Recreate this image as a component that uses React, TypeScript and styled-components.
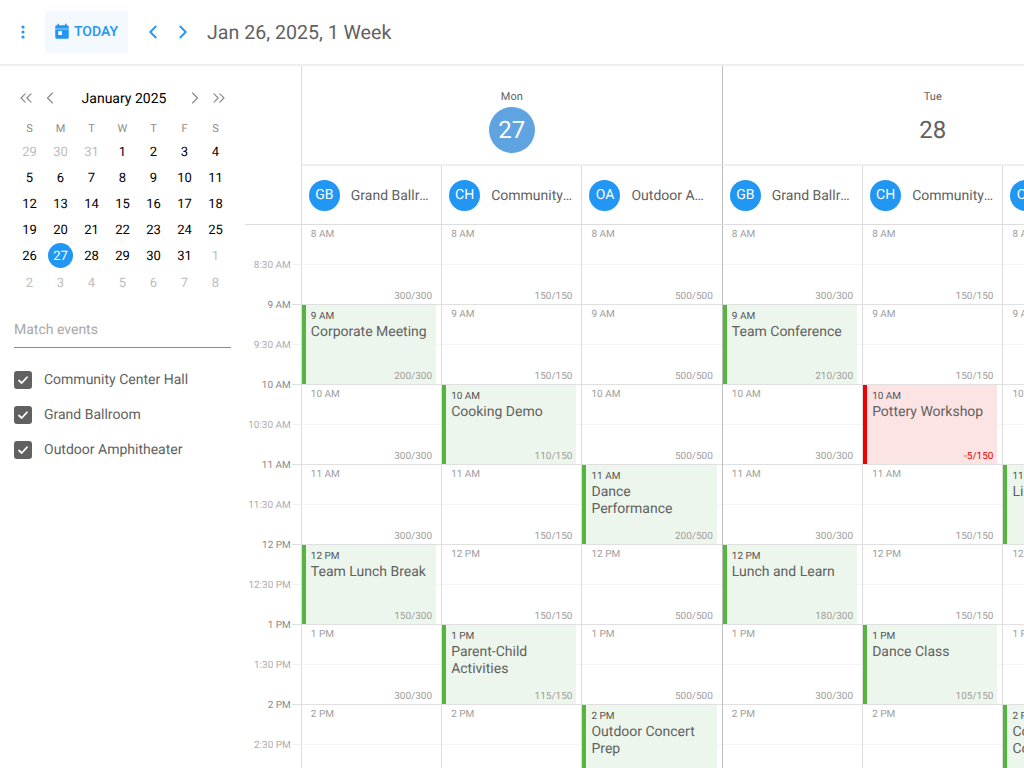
import React from 'react';
import styled, { createGlobalStyle } from 'styled-components';
import { ChevronLeft, ChevronRight, ChevronsLeft, ChevronsRight } from 'lucide-react';

const GlobalStyle = createGlobalStyle`
  html, body {
    margin: 0;
    width: 1024px;
    height: 768px;
    overflow: hidden;
    background: #fff;
    font-family: Roboto, "Liberation Sans", sans-serif;
    text-rendering: geometricPrecision;
  }
  * {
    box-sizing: border-box;
  }
`;

type EventType = {
  title: string
  booked: number
  danger?: boolean
}

type ResourceType = {
  initials: string
  name: string
  capacity: number
  events: Record<string, EventType>
}

type DayType = {
  name: string
  date: number
  today?: boolean
  resources: ResourceType[]
}

const HOURS = ['8 AM', '9 AM', '10 AM', '11 AM', '12 PM', '1 PM', '2 PM'];
const AXIS = ['8:30 AM', '9 AM', '9:30 AM', '10 AM', '10:30 AM', '11 AM', '11:30 AM', '12 PM', '12:30 PM', '1 PM', '1:30 PM', '2 PM', '2:30 PM'];

const DAYS: DayType[] = [
  {
    name: 'Mon',
    date: 27,
    today: true,
    resources: [
      {
        initials: 'GB', name: 'Grand Ballroom', capacity: 300, events: {
          '9 AM': { title: 'Corporate Meeting', booked: 200 },
          '12 PM': { title: 'Team Lunch Break', booked: 150 },
        },
      },
      {
        initials: 'CH', name: 'Community Center Hall', capacity: 150, events: {
          '10 AM': { title: 'Cooking Demo', booked: 110 },
          '1 PM': { title: 'Parent-Child Activities', booked: 115 },
        },
      },
      {
        initials: 'OA', name: 'Outdoor Amphitheater', capacity: 500, events: {
          '11 AM': { title: 'Dance Performance', booked: 200 },
          '2 PM': { title: 'Outdoor Concert Prep', booked: 300 },
        },
      },
    ],
  },
  {
    name: 'Tue',
    date: 28,
    resources: [
      {
        initials: 'GB', name: 'Grand Ballroom', capacity: 300, events: {
          '9 AM': { title: 'Team Conference', booked: 210 },
          '12 PM': { title: 'Lunch and Learn', booked: 180 },
        },
      },
      {
        initials: 'CH', name: 'Community Center Hall', capacity: 150, events: {
          '10 AM': { title: 'Pottery Workshop', booked: -5, danger: true },
          '1 PM': { title: 'Dance Class', booked: 105 },
        },
      },
      {
        initials: 'OA', name: 'Outdoor Amphitheater', capacity: 500, events: {
          '11 AM': { title: 'Live Music', booked: 200 },
          '2 PM': { title: 'Community Concert', booked: 300 },
        },
      },
    ],
  },
];

const WEEKDAYS = ['S', 'M', 'T', 'W', 'T', 'F', 'S'];
const MONTH_CELLS = [
  ...[29, 30, 31].map((n) => ({ n, muted: true })),
  ...Array.from({ length: 31 }, (_, i) => ({ n: i + 1, muted: false })),
  ...[1, 2, 3, 4, 5, 6, 7, 8].map((n) => ({ n, muted: true })),
];
const ROOMS = ['Community Center Hall', 'Grand Ballroom', 'Outdoor Amphitheater'];

const TodayIcon = () => (
  <svg width="18" height="18" viewBox="0 0 24 24" fill="#2196f3">
    <path
      fillRule="evenodd"
      d="M19 3h-1V1h-2v2H8V1H6v2H5a2 2 0 0 0-2 2v14a2 2 0 0 0 2 2h14a2 2 0 0 0 2-2V5a2 2 0 0 0-2-2zM7 10.5h5v5.5H7z"
    />
    <path d="M3 7.5h18v1H3z" fill="#d6eafc" />
  </svg>
);

const CheckIcon = () => (
  <svg width="12" height="12" viewBox="0 0 24 24" fill="none" stroke="#fff" strokeWidth="3.6" strokeLinecap="round" strokeLinejoin="round">
    <path d="M4 13l5.5 5L20 6.5" />
  </svg>
);

const KebabIcon = () => (
  <svg width="4" height="14" viewBox="0 0 4 14" fill="#2196f3">
    <circle cx="2" cy="2" r="1.6" />
    <circle cx="2" cy="7" r="1.6" />
    <circle cx="2" cy="12" r="1.6" />
  </svg>
);

const Slot = ({ hour, resource }: { hour: string; resource: ResourceType }) => {
  const event = resource.events[hour];
  if (event) {
    return (
      <SlotCell>
        <EventCard $danger={event.danger}>
          <EventTime>{hour}</EventTime>
          <EventTitle>{event.title}</EventTitle>
          <EventCapacity $danger={event.danger}>{event.booked}/{resource.capacity}</EventCapacity>
        </EventCard>
      </SlotCell>
    );
  }
  return (
    <SlotCell $empty>
      <SlotLabel>{hour}</SlotLabel>
      <SlotCapacity>{resource.capacity}/{resource.capacity}</SlotCapacity>
    </SlotCell>
  );
};

export default function App() {
  return (
    <Page>
      <GlobalStyle />
      <TopBar>
        <KebabButton><KebabIcon /></KebabButton>
        <TodayButton><TodayIcon />TODAY</TodayButton>
        <ArrowGroup>
          <ArrowButton><ChevronLeft size={22} strokeWidth={2} /></ArrowButton>
          <ArrowButton><ChevronRight size={22} strokeWidth={2} /></ArrowButton>
        </ArrowGroup>
        <RangeTitle>Jan 26, 2025, 1 Week</RangeTitle>
      </TopBar>
      <Body>
        <Sidebar>
          <MonthNav>
            <NavButton><ChevronsLeft size={20} strokeWidth={1.4} /></NavButton>
            <NavButton><ChevronLeft size={20} strokeWidth={1.4} /></NavButton>
            <MonthTitle>January 2025</MonthTitle>
            <NavButton><ChevronRight size={20} strokeWidth={1.4} /></NavButton>
            <NavButton><ChevronsRight size={20} strokeWidth={1.4} /></NavButton>
          </MonthNav>
          <MonthGrid>
            {WEEKDAYS.map((d, i) => <WeekdayCell key={i}>{d}</WeekdayCell>)}
            {MONTH_CELLS.map((c, i) => (
              <DateCell key={i} $muted={c.muted}>
                <DateMark $selected={!c.muted && c.n === 27}>{c.n}</DateMark>
              </DateCell>
            ))}
          </MonthGrid>
          <SearchField>Match events</SearchField>
          <RoomList>
            {ROOMS.map((room) => (
              <RoomRow key={room}>
                <CheckBox><CheckIcon /></CheckBox>
                {room}
              </RoomRow>
            ))}
          </RoomList>
        </Sidebar>
        <Scheduler>
          <HeadRow>
            <AxisSpacer />
            {DAYS.map((day, i) => (
              <DayHead key={day.name} $first={i === 0}>
                <DayName>{day.name}</DayName>
                <DayNumber $today={day.today}>{day.date}</DayNumber>
              </DayHead>
            ))}
          </HeadRow>
          <ResourceRow>
            <AxisSpacer />
            {DAYS.map((day, i) => (
              <DayGroup key={day.name}>
                {day.resources.map((r, j) => (
                  <ResourceHead key={r.initials} $dayStart={i > 0 && j === 0}>
                    <Avatar>{r.initials}</Avatar>
                    <ResourceName>{r.name}</ResourceName>
                  </ResourceHead>
                ))}
              </DayGroup>
            ))}
          </ResourceRow>
          <GridRow>
            <Axis>
              {AXIS.map((label) => (
                <AxisRow key={label}>
                  <AxisLabel $half={label.includes(':')}>{label}</AxisLabel>
                  <AxisTick $half={label.includes(':')} />
                </AxisRow>
              ))}
            </Axis>
            {DAYS.map((day, i) => (
              <DayGroup key={day.name}>
                {day.resources.map((r, j) => (
                  <Column key={r.initials} $dayStart={i > 0 && j === 0}>
                    {HOURS.map((hour) => <Slot key={hour} hour={hour} resource={r} />)}
                  </Column>
                ))}
              </DayGroup>
            ))}
          </GridRow>
        </Scheduler>
      </Body>
    </Page>
  );
}

const Page = styled.div`
  width: 1024px;
  height: 768px;
  overflow: hidden;
  display: flex;
  flex-direction: column;
`;

const TopBar = styled.header`
  height: 66px;
  flex: none;
  display: flex;
  align-items: center;
  border-bottom: 2px solid #eeeeee;
`;

const KebabButton = styled.div`
  width: 45px;
  height: 42px;
  padding-left: 1px;
  display: flex;
  align-items: center;
  justify-content: center;
`;

const TodayButton = styled.div`
  width: 83px;
  height: 42px;
  display: flex;
  align-items: center;
  gap: 3px;
  padding-left: 8px;
  border-radius: 2px;
  background: #f4f9ff;
  color: #2196f3;
  font-size: 14px;
  font-weight: 500;
`;

const ArrowGroup = styled.div`
  display: flex;
  margin-left: 10px;
`;

const ArrowButton = styled.div`
  width: 30px;
  height: 42px;
  display: flex;
  align-items: center;
  justify-content: center;
  color: #2196f3;
`;

const RangeTitle = styled.div`
  margin-left: 9px;
  font-size: 19.6px;
  color: #616161;
`;

const Body = styled.div`
  flex: 1;
  min-height: 0;
  display: flex;
`;

const Sidebar = styled.aside`
  width: 245px;
  flex: none;
  padding: 22px 14px 0;
`;

const MonthNav = styled.div`
  height: 20px;
  margin-bottom: 10px;
  display: flex;
  align-items: center;
`;

const NavButton = styled.div`
  width: 24px;
  height: 20px;
  display: flex;
  align-items: center;
  justify-content: center;
  color: #8a8a8a;
`;

const MonthTitle = styled.div`
  flex: 1;
  padding: 2px 0 0 3px;
  text-align: center;
  font-size: 14px;
  color: #000;
`;

const MonthGrid = styled.div`
  display: grid;
  grid-template-columns: repeat(7, 31px);
  grid-auto-rows: 26.2px;
  grid-template-rows: 20px;
`;

const WeekdayCell = styled.div`
  display: flex;
  align-items: center;
  justify-content: center;
  font-size: 11px;
  color: #8a8a8a;
`;

const DateCell = styled.div<{ $muted?: boolean }>`
  display: flex;
  align-items: center;
  justify-content: center;
  font-size: 13px;
  color: ${(p) => (p.$muted ? '#bdbdbd' : '#000')};
`;

const DateMark = styled.div<{ $selected?: boolean }>`
  width: 25px;
  height: 25px;
  padding-top: 2px;
  border-radius: 50%;
  display: flex;
  align-items: center;
  justify-content: center;
  ${(p) => p.$selected && 'background: #2196f3; color: #fff;'}
`;

const SearchField = styled.div`
  margin-top: 17px;
  height: 36px;
  line-height: 37px;
  border-bottom: 1px solid #8a8a8a;
  font-size: 14px;
  color: #a8a8a8;
`;

const RoomList = styled.div`
  margin-top: 14px;
  display: flex;
  flex-direction: column;
`;

const RoomRow = styled.div`
  height: 35px;
  display: flex;
  align-items: center;
  gap: 12px;
  font-size: 14px;
  color: #616161;
`;

const CheckBox = styled.div`
  width: 18px;
  height: 18px;
  border-radius: 3px;
  background: #616161;
  display: flex;
  align-items: center;
  justify-content: center;
`;

const Scheduler = styled.main`
  flex: 1;
  min-width: 0;
  overflow: hidden;
  display: flex;
  flex-direction: column;
`;

const HeadRow = styled.div`
  display: flex;
  flex: none;
`;

const AxisSpacer = styled.div`
  width: 55.8px;
  flex: none;
`;

const DayHead = styled.div<{ $first?: boolean }>`
  width: 421px;
  height: 100px;
  flex: none;
  padding-top: 25px;
  display: flex;
  flex-direction: column;
  align-items: center;
  border-left: 1px solid ${(p) => (p.$first ? '#dddddd' : '#bdbdbd')};
  border-bottom: 2px solid #eeeeee;
`;

const DayName = styled.div`
  height: 12px;
  line-height: 12px;
  margin-bottom: 4px;
  font-size: 11px;
  color: #616161;
`;

const DayNumber = styled.div<{ $today?: boolean }>`
  width: 46px;
  height: 46px;
  border-radius: 50%;
  display: flex;
  align-items: center;
  justify-content: center;
  font-size: 24px;
  color: ${(p) => (p.$today ? '#fff' : '#616161')};
  background: ${(p) => (p.$today ? '#5fa4e0' : 'transparent')};
`;

const ResourceRow = styled.div`
  display: flex;
  flex: none;
  height: 59px;
  border-bottom: 1px solid #dddddd;
`;

const DayGroup = styled.div`
  width: 421px;
  flex: none;
  display: flex;
`;

const ResourceHead = styled.div<{ $dayStart?: boolean }>`
  flex: 1 1 0;
  min-width: 0;
  display: flex;
  align-items: center;
  gap: 11px;
  padding: 0 8px 0 7px;
  border-left: 1px solid ${(p) => (p.$dayStart ? '#bdbdbd' : '#dddddd')};
`;

const Avatar = styled.div`
  width: 31px;
  height: 31px;
  flex: none;
  border-radius: 50%;
  background: #2196f3;
  color: #fff;
  font-size: 14px;
  display: flex;
  align-items: center;
  justify-content: center;
`;

const ResourceName = styled.div`
  min-width: 0;
  padding-top: 1px;
  white-space: nowrap;
  overflow: hidden;
  text-overflow: ellipsis;
  font-size: 14px;
  color: #616161;
`;

const GridRow = styled.div`
  display: flex;
  flex: none;
`;

const Axis = styled.div`
  width: 55.8px;
  flex: none;
  display: flex;
  flex-direction: column;
`;

const AxisRow = styled.div`
  height: 40px;
  flex: none;
  display: flex;
  align-items: flex-end;
  justify-content: flex-end;
`;

const AxisLabel = styled.div<{ $half?: boolean }>`
  height: 12px;
  line-height: 14px;
  margin-bottom: -6px;
  font-size: 10px;
  color: ${(p) => (p.$half ? '#adadad' : '#8a8a8a')};
`;

const AxisTick = styled.div<{ $half?: boolean }>`
  width: 9px;
  height: 1px;
  margin-left: 1px;
  background: ${(p) => (p.$half ? '#f2f2f2' : '#e0e0e0')};
`;

const Column = styled.div<{ $dayStart?: boolean }>`
  flex: 1 1 0;
  min-width: 0;
  border-left: 1px solid ${(p) => (p.$dayStart ? '#bdbdbd' : '#dddddd')};
`;

const SlotCell = styled.div<{ $empty?: boolean }>`
  height: 80px;
  display: flex;
  flex-direction: column;
  border-bottom: 1px solid #e0e0e0;
  background: linear-gradient(#f5f5f5, #f5f5f5) 0 39px / 100% 1px no-repeat;
  ${(p) => p.$empty && 'padding: 3px 9px 2px 9px;'}
`;

const SlotLabel = styled.div`
  height: 12px;
  line-height: 14px;
  font-size: 10px;
  color: #9e9e9e;
`;

const SlotCapacity = styled.div`
  margin-top: auto;
  height: 12px;
  line-height: 14px;
  text-align: right;
  font-size: 10px;
  color: #9e9e9e;
`;

const EventCard = styled.div<{ $danger?: boolean }>`
  height: 79px;
  margin-right: 5px;
  padding: 5px 4px 2px 5px;
  display: flex;
  flex-direction: column;
  border-left: 4px solid ${(p) => (p.$danger ? '#f00000' : '#55b53f')};
  background: ${(p) => (p.$danger ? '#fde4e4' : '#edf6ec')};
`;

const EventTime = styled.div`
  height: 12px;
  line-height: 14px;
  font-size: 10px;
  color: #555555;
`;

const EventTitle = styled.div`
  margin-top: 2px;
  line-height: 17px;
  font-size: 14px;
  color: #616161;
`;

const EventCapacity = styled.div<{ $danger?: boolean }>`
  margin-top: auto;
  height: 12px;
  line-height: 14px;
  text-align: right;
  font-size: 10px;
  color: ${(p) => (p.$danger ? '#f00000' : '#9e9e9e')};
`;
